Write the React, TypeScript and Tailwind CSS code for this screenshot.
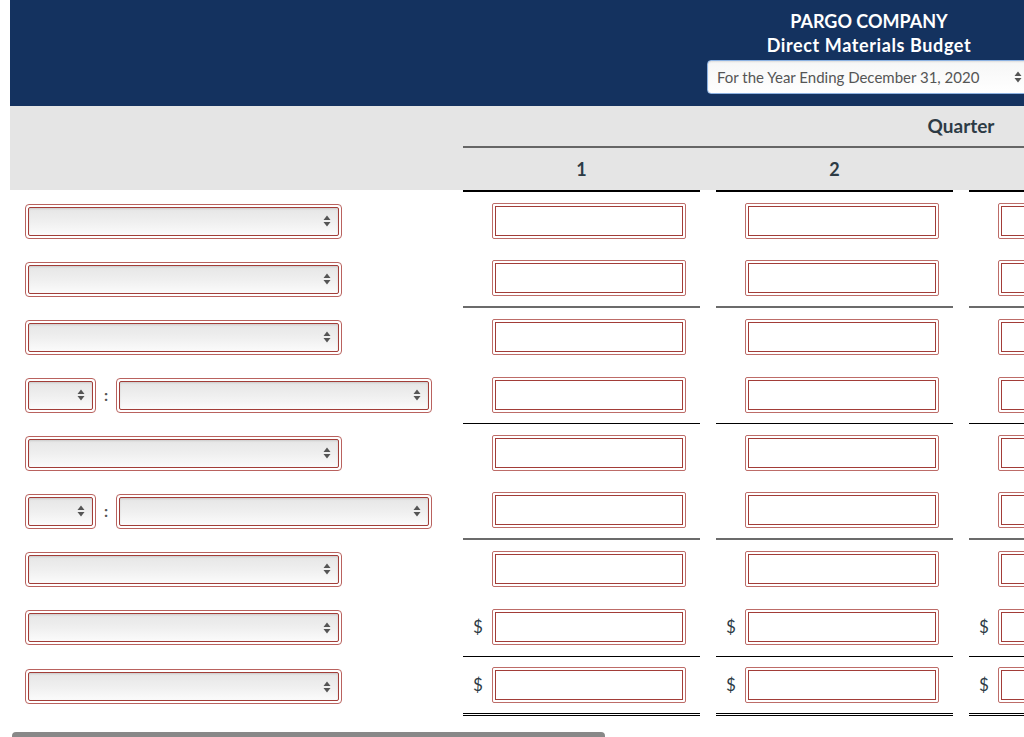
import React from 'react';

type Line = 'none' | 'gray' | 'black' | 'double';

const rows: { pair: boolean; line: Line; dollar: boolean; h: string }[] = [
  { pair: false, line: 'none', dollar: false, h: 'h-[58px]' },
  { pair: false, line: 'gray', dollar: false, h: 'h-[58px]' },
  { pair: false, line: 'none', dollar: false, h: 'h-[58px]' },
  { pair: true, line: 'black', dollar: false, h: 'h-[58px]' },
  { pair: false, line: 'none', dollar: false, h: 'h-[58px]' },
  { pair: true, line: 'gray', dollar: false, h: 'h-[58px]' },
  { pair: false, line: 'none', dollar: false, h: 'h-[58px]' },
  { pair: false, line: 'black', dollar: true, h: 'h-[59px]' },
  { pair: false, line: 'double', dollar: true, h: 'h-[59px]' },
];

const lineClass: Record<Line, string> = {
  none: '',
  gray: 'border-b-2 border-[#6b6b6b]',
  black: 'border-b border-black',
  double: 'border-b-[3px] border-double border-black',
};

function Arrows() {
  return (
    <svg width="8" height="12" viewBox="0 0 8 12">
      <path d="M4 0.5L7.5 5H0.5z M0.5 7H7.5L4 11.5z" fill="#555" />
    </svg>
  );
}

function Select({ width }: { width: string }) {
  return (
    <div className={`${width} h-[35px] rounded-[4px] border border-[#b9625e] p-[2px] bg-white`}>
      <div className="h-full w-full rounded-[2px] border border-[#a23d38] bg-gradient-to-b from-[#e6e6e6] via-[#efefef] to-[#fbfbfb] shadow-[inset_0_1px_2px_rgba(0,0,0,0.12)] flex items-center justify-end pr-[7px]">
        <Arrows />
      </div>
    </div>
  );
}

function Input() {
  return (
    <div className="w-[194px] h-[36px] rounded-[2px] border border-[#bd6c68] p-[2px] bg-white">
      <div className="h-full w-full border border-[#a23d38] bg-white" />
    </div>
  );
}

export default function App() {
  return (
    <div className="relative w-[1024px] h-[737px] overflow-hidden bg-white font-['Lato',sans-serif]">
      <div className="ml-[10px] w-[1500px]">
        {/* title bar */}
        <div className="h-[106px] bg-[#14325f] flex">
          <div className="w-[697px]" />
          <div className="w-[324px] pt-[9px] text-center">
            <div className="text-white font-bold text-[18px] leading-[24px]">PARGO COMPANY</div>
            <div className="text-white font-bold text-[18px] leading-[24px] tracking-[0.6px]">Direct Materials Budget</div>
            <div className="mt-[3px] h-[34px] rounded-[4px] border border-[#8db2e2] bg-gradient-to-b from-[#f6f6f6] to-white shadow-[inset_0_1px_2px_rgba(0,0,0,0.1)] flex items-center justify-between pl-[9px] pr-[8px]">
              <span className="text-[15px] text-[#555]">For the Year Ending December 31, 2020</span>
              <Arrows />
            </div>
          </div>
        </div>

        {/* column headings */}
        <div className="h-[84px] bg-[#e5e5e5] flex">
          <div className="w-[453px]" />
          <div className="flex-1 flex flex-col">
            <div className="h-[42px] w-[996px] border-b-2 border-[#666] flex items-center justify-center">
              <span className="font-bold text-[19px] text-[#2d3b45]">Quarter</span>
            </div>
            <div className="flex-1 flex gap-[16px]">
              {['1', '2', '3', '4'].map((n) => (
                <div key={n} className="w-[237px] flex items-center justify-center font-bold text-[18px] text-[#2d3b45]">
                  {n}
                </div>
              ))}
            </div>
          </div>
        </div>
        <div className="flex">
          <div className="w-[453px]" />
          <div className="flex gap-[16px]">
            {[0, 1, 2, 3].map((i) => (
              <div key={i} className="w-[237px] h-[2px] bg-black" />
            ))}
          </div>
        </div>

        {/* body rows */}
        {rows.map((r, i) => (
          <div key={i} className={`flex ${r.h}`}>
            <div className="w-[453px] pl-[15px] flex items-center">
              {r.pair ? (
                <>
                  <Select width="w-[71px]" />
                  <span className="w-[20px] text-center text-[16px] font-bold text-[#555]">:</span>
                  <Select width="w-[316px]" />
                </>
              ) : (
                <Select width="w-[317px]" />
              )}
            </div>
            <div className="flex gap-[16px]">
              {[0, 1, 2, 3].map((c) => (
                <div key={c} className={`w-[237px] h-full flex items-center ${lineClass[r.line]}`}>
                  <span className="w-[29px] pl-[10px] text-[17px] text-[#2d3b45]">{r.dollar ? '$' : ''}</span>
                  <Input />
                </div>
              ))}
            </div>
          </div>
        ))}
      </div>

      <div className="absolute left-[12px] bottom-0 w-[593px] h-[5px] rounded-t-[4px] bg-[#888]" />
    </div>
  );
}
